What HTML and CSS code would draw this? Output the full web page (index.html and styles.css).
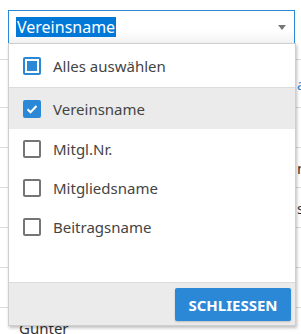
FILE: index.html
```html
<!DOCTYPE html>
<html lang="de">
<head>
    <meta charset="UTF-8">
    <meta name="viewport" content="width=device-width, initial-scale=1.0">
    <title>Spaltenauswahl</title>
    <link rel="stylesheet" href="styles.css">
</head>
<body>
    <div class="grid">
        <div class="grid-row grid-head">
            <div class="column-select">
                <span class="selected-text">Vereinsname</span>
                <span class="caret"></span>
            </div>
        </div>
        <div class="grid-row"><span></span><span class="cut link">a</span></div>
        <div class="grid-row"><span></span><span class="cut"></span></div>
        <div class="grid-row"><span></span><span class="cut">n</span></div>
        <div class="grid-row"><span></span><span class="cut">s</span></div>
        <div class="grid-row"><span></span><span class="cut"></span></div>
        <div class="grid-row"><span></span><span class="cut"></span></div>
        <div class="grid-row"><span class="cell">Günter</span><span class="cut"></span></div>
    </div>

    <!-- dropdown list opened over the grid -->
    <div class="column-menu">
        <div class="option option-all">
            <span class="box box-partial"><span></span></span>
            <span class="label">Alles auswählen</span>
        </div>
        <div class="option-list">
            <div class="option option-active">
                <span class="box box-checked">
                    <svg width="14" height="14" viewBox="0 0 14 14"><path d="M2.5 7.2l3 3 6-6.2" fill="none" stroke="#fff" stroke-width="2"/></svg>
                </span>
                <span class="label">Vereinsname</span>
            </div>
            <div class="option">
                <span class="box"></span>
                <span class="label">Mitgl.Nr.</span>
            </div>
            <div class="option">
                <span class="box"></span>
                <span class="label">Mitgliedsname</span>
            </div>
            <div class="option">
                <span class="box"></span>
                <span class="label">Beitragsname</span>
            </div>
        </div>
        <div class="menu-footer">
            <button class="close-btn">Schliessen</button>
        </div>
    </div>
</body>
</html>
```
FILE: styles.css
```css
body {
    margin: 0;
    background: #fff;
    font-family: 'Noto Sans', 'Open Sans', sans-serif;
    color: #444;
    overflow: hidden;
    height: 334px;
}

/* Background grid */
.grid-row {
    display: flex;
    justify-content: space-between;
    align-items: center;
    height: 39px;
    border-bottom: 1px solid #dcdcdc;
    font-size: 15px;
}

.grid-row:nth-child(2) {
    height: 47px;
}

.grid-head {
    height: 60px;
    align-items: flex-start;
    padding: 10px 6px 0 8px;
    box-sizing: border-box;
}

.cell {
    padding-left: 19px;
    color: #333;
}

.cut {
    width: 4px;
    overflow: hidden;
    color: #333;
}

.link {
    color: #2a88d6;
}

/* Select box */
.column-select {
    flex: 1;
    height: 34px;
    box-sizing: border-box;
    border: 1px solid #2a88d6;
    background: linear-gradient(#fff 60%, #f2f2f2);
    display: flex;
    align-items: center;
    justify-content: space-between;
    padding: 0 8px 0 7px;
}

.selected-text {
    background: #0078d7;
    color: #fff;
    font-size: 16px;
    line-height: 20px;
    padding: 0 1px;
}

.caret {
    width: 0;
    height: 0;
    border-left: 4px solid transparent;
    border-right: 4px solid transparent;
    border-top: 5px solid #777;
}

/* Dropdown */
.column-menu {
    position: absolute;
    left: 8px;
    top: 43px;
    width: 288px;
    box-sizing: border-box;
    border: 1px solid #cfcfcf;
    background: #fff;
    box-shadow: 1px 2px 3px rgba(0, 0, 0, 0.25);
}

.option {
    display: flex;
    align-items: center;
    height: 39px;
    padding-left: 14px;
    font-size: 15px;
}

.option-all {
    height: 43px;
    border-bottom: 1px solid #dcdcdc;
}

.option-list {
    height: 194px;
}

.option-active {
    background: #ebebeb;
    height: 41px;
}

.label {
    margin-left: 12px;
}

.box {
    width: 18px;
    height: 18px;
    box-sizing: border-box;
    border: 2px solid #757575;
    border-radius: 2px;
    display: flex;
    align-items: center;
    justify-content: center;
    background: #fff;
}

.box-partial {
    border-color: #2a88d6;
    padding: 2px;
}

.box-partial span {
    width: 100%;
    height: 100%;
    background: #2a88d6;
}

.box-checked {
    border-color: #2a88d6;
    background: #2a88d6;
}

.menu-footer {
    border-top: 1px solid #dcdcdc;
    background: #ebebeb;
    display: flex;
    justify-content: flex-end;
    padding: 5px 4px 4px 0;
}

.close-btn {
    height: 33px;
    width: 116px;
    border: none;
    border-radius: 2px;
    background: #2a88d6;
    color: #fff;
    font-family: 'Noto Sans', 'Open Sans', sans-serif;
    font-weight: bold;
    font-size: 15px;
    text-transform: uppercase;
    box-shadow: 0 1px 2px rgba(0, 0, 0, 0.2);
    cursor: pointer;
}
```
